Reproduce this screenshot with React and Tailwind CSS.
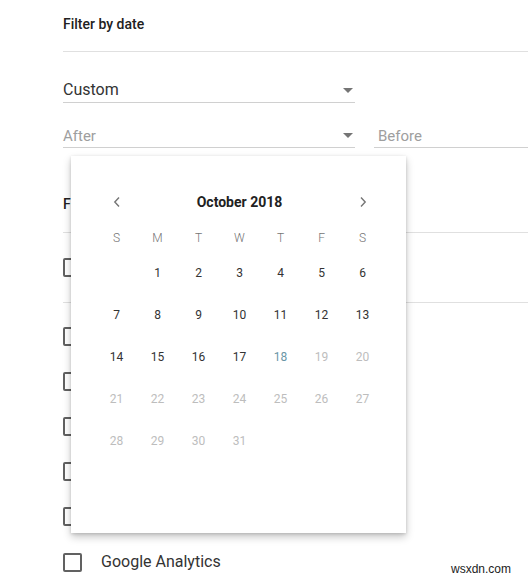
import React from 'react'

const days = [
  [null, 1, 2, 3, 4, 5, 6],
  [7, 8, 9, 10, 11, 12, 13],
  [14, 15, 16, 17, 18, 19, 20],
  [21, 22, 23, 24, 25, 26, 27],
  [28, 29, 30, 31, null, null, null],
]

function Caret() {
  return (
    <svg width="10" height="5" viewBox="0 0 10 5" className="shrink-0">
      <path d="M0 0h10L5 5z" fill="#757575" />
    </svg>
  )
}

function Chevron({ dir }) {
  return (
    <svg width="8" height="12" viewBox="0 0 8 12">
      <path
        d={dir === 'left' ? 'M6 1.5 1.8 6 6 10.5' : 'M2 1.5 6.2 6 2 10.5'}
        fill="none"
        stroke="#757575"
        strokeWidth="1.4"
      />
    </svg>
  )
}

function Box() {
  return <div className="w-[19px] h-[19px] border-2 border-[#616161] rounded-[2px] shrink-0" />
}

function dayColor(d) {
  if (d === 18) return 'text-[#6a96a6]'
  if (d > 18) return 'text-[#bdbdbd]'
  return 'text-[#333]'
}

export default function App() {
  return (
    <div className="relative w-[528px] h-[581px] bg-white overflow-hidden font-['Roboto',sans-serif] text-[#333]">
      <div className="pl-[63px]">
        <div className="pt-[14px] pb-[17px] border-b border-[#e0e0e0] text-[14px] leading-5 font-medium text-[#212121]">
          Filter by date
        </div>

        <div className="mt-[26px] w-[292px] h-[25px] flex items-center justify-between pr-[2px] border-b border-[#d0d0d0]">
          <span className="text-[16px] leading-6 text-[#333]">Custom</span>
          <Caret />
        </div>

        <div className="mt-[20px] flex">
          <div className="w-[292px] h-[25px] flex items-center justify-between pr-[2px] border-b border-[#d0d0d0]">
            <span className="text-[15px] leading-6 text-[#9e9e9e] pt-[2px]">After</span>
            <Caret />
          </div>
          <div className="ml-[19px] flex-1 h-[25px] flex items-center pl-[4px] border-b border-[#d0d0d0]">
            <span className="text-[15px] leading-6 text-[#9e9e9e] pt-[2px]">Before</span>
          </div>
        </div>

        <div className="mt-[46px] pb-[18px] border-b border-[#e0e0e0] text-[14px] leading-5 font-medium text-[#212121]">
          Filter by source
        </div>

        <div className="pt-[25px] pb-[25px] border-b border-[#e0e0e0]">
          <Box />
        </div>

        <div className="pt-[24px] flex flex-col gap-[26px]">
          <Box />
          <Box />
          <Box />
          <Box />
          <Box />
          <div className="flex items-center gap-[19px]">
            <Box />
            <span className="text-[16px] leading-5 text-[#333]">Google Analytics</span>
          </div>
        </div>
      </div>

      <div className="absolute left-[71px] top-[156px] w-[335px] h-[377px] bg-white shadow-[0_1px_3px_rgba(0,0,0,0.15),0_4px_8px_rgba(0,0,0,0.22)] pl-[25px] pr-[23px] pt-[30px]">
        <div className="grid grid-cols-7 h-[32px] items-center">
          <div className="flex justify-center">
            <Chevron dir="left" />
          </div>
          <div className="col-span-5 text-center text-[14px] font-bold text-[#212121]">October 2018</div>
          <div className="flex justify-center">
            <Chevron dir="right" />
          </div>
        </div>
        <div className="mt-[6px] grid grid-cols-7 h-[28px] items-center text-center text-[12px] font-light text-[#757575]">
          {['S', 'M', 'T', 'W', 'T', 'F', 'S'].map((d, i) => (
            <span key={i}>{d}</span>
          ))}
        </div>
        {days.map((row, r) => (
          <div key={r} className="grid grid-cols-7 h-[42px] items-center text-center text-[12px]">
            {row.map((d, i) => (
              <span key={i} className={d ? dayColor(d) : ''}>
                {d || ''}
              </span>
            ))}
          </div>
        ))}
      </div>

      <div className="absolute right-[17px] bottom-[3px] text-[12px] text-[#222] font-['Liberation_Sans',sans-serif]">
        wsxdn.com
      </div>
    </div>
  )
}
